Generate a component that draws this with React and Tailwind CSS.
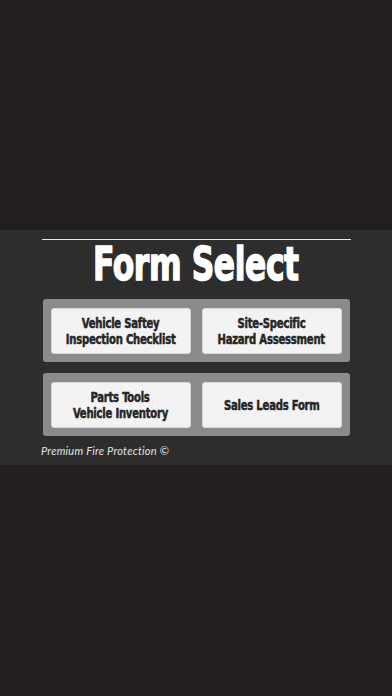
import React from "react";

const impact = {
  fontFamily: '"DejaVu Sans Condensed", "DejaVu Sans", sans-serif',
};

function Btn({ lines }) {
  return (
    <button className="h-[46px] w-[140px] rounded-[3px] bg-[#f3f3f3] border border-[#d8d8d8] flex flex-col items-center justify-center">
      {lines.map((l) => (
        <span
          key={l}
          className="block text-[14px] leading-[16px] font-bold text-[#262626] tracking-[-0.3px] scale-x-[0.8] whitespace-nowrap [-webkit-text-stroke:0.5px_#262626]"
          style={impact}
        >
          {l}
        </span>
      ))}
    </button>
  );
}

export default function App() {
  return (
    <div className="w-[392px] h-[696px] bg-[#231f20] flex flex-col">
      <div className="h-[230px]" />
      <div className="h-[235px] bg-[#2d2d2d] flex flex-col items-center">
        <div className="mt-[9px] h-px w-[309px] bg-[#e6e6e6]" />
        <div className="h-[59px] pb-[12px] flex items-center justify-center">
          <span
            className="block text-[47px] leading-none font-bold text-white scale-x-[0.74] whitespace-nowrap tracking-[-0.5px] [-webkit-text-stroke:1.5px_white]"
            style={impact}
          >
            Form Select
          </span>
        </div>
        <div className="w-[307px] h-[63px] rounded-[3px] bg-[#8b8b8b] flex items-center justify-between px-[8px]">
          <Btn lines={["Vehicle Saftey", "Inspection Checklist"]} />
          <Btn lines={["Site-Specific", "Hazard Assessment"]} />
        </div>
        <div className="mt-[11px] w-[307px] h-[63px] rounded-[3px] bg-[#8b8b8b] flex items-center justify-between px-[8px]">
          <Btn lines={["Parts Tools", "Vehicle Inventory"]} />
          <Btn lines={["Sales Leads Form"]} />
        </div>
        <div
          className="w-[310px] mt-[8px] text-[11px] leading-[14px] italic font-normal text-[#e2e2e2] tracking-[0.25px]"
          style={{ fontFamily: 'Lato, "Open Sans", sans-serif' }}
        >
          Premium Fire Protection ©
        </div>
      </div>
      <div className="flex-1" />
    </div>
  );
}
